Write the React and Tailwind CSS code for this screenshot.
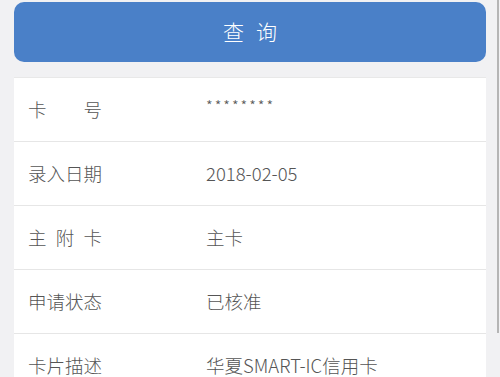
import React from 'react';

const rows = [
  { label: ['卡', '号'], value: '********' },
  { label: ['录入日期'], value: '2018-02-05' },
  { label: ['主', '附', '卡'], value: '主卡' },
  { label: ['申请状态'], value: '已核准' },
  { label: ['卡片描述'], value: '华夏SMART-IC信用卡' },
];

const App = () => {
  return (
    <div
      className="relative h-[377px] w-[500px] overflow-hidden bg-[#f1f1f3] pt-[2px]"
      style={{ fontFamily: '"Noto Sans CJK SC", "Noto Sans", sans-serif' }}
    >
      <div className="mx-[14px]">
        <button className="flex h-[60px] w-full items-center justify-center rounded-[10px] bg-[#4a80c8] text-[21px] font-light tracking-[12px] text-white">
          <span className="pl-[12px]">查询</span>
        </button>

        {/* details */}
        <div className="mt-[15px] border-t border-[#e8e8e8] bg-white">
          {rows.map((row, i) => (
            <div
              key={i}
              className="flex h-[64px] items-center border-b border-[#e6e6e6] pl-[14px] text-[18.5px] font-light text-[#555]"
            >
              <div className="flex w-[74px] justify-between">
                {row.label.map((ch, j) => (
                  <span key={j}>{ch}</span>
                ))}
              </div>
              <div className={`ml-[104px] ${row.value.startsWith('*') ? '-mt-[6px] text-[15px] tracking-[2px]' : ''}`}>
                {row.value}
              </div>
            </div>
          ))}
        </div>
      </div>

      {/* scrollbar */}
      <div className="absolute right-[1px] top-0 h-[333px] w-[2px] bg-[#b5b5b5]" />
    </div>
  );
};

export default App;
